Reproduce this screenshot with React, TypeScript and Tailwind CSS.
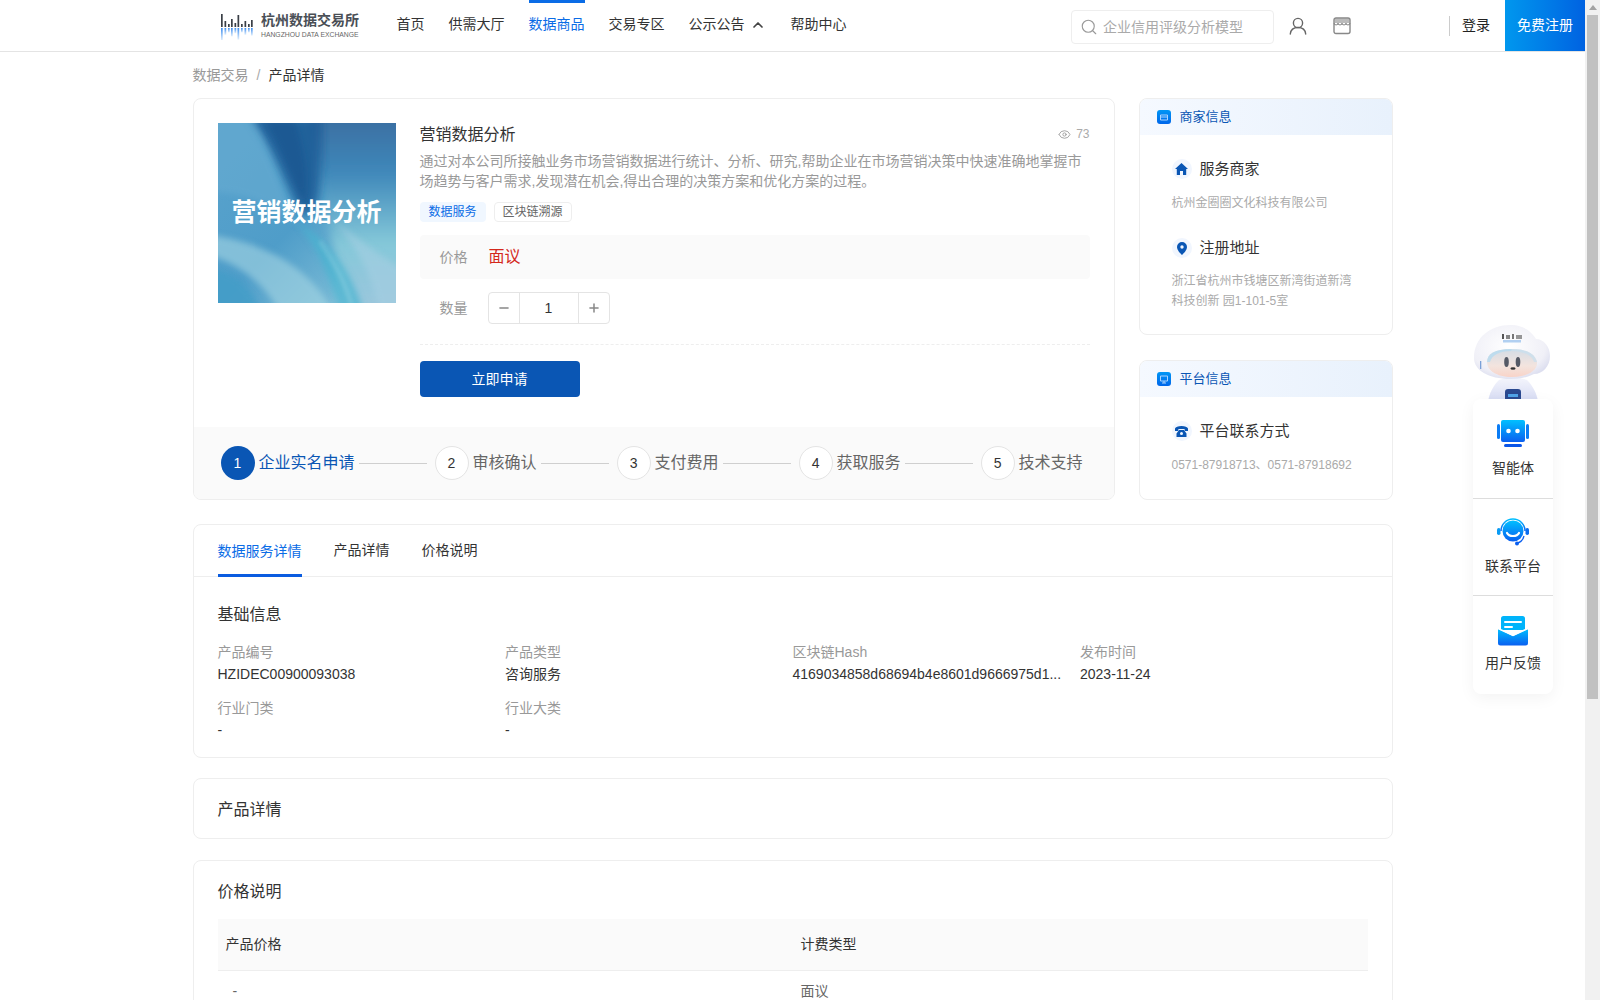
import { ChevronUp, Eye, Minus, Plus, Search } from "lucide-react";

function Logo() {
  const bars = [
    [1, 13], [4.500, 6], [8, 3], [11, 8], [14.500, 4], [17.500, 12], [21, 3], [24.500, 6], [28, 3], [31, 7],
  ];
  return (
    <div className="flex w-[137px] items-center gap-[5px]">
      <svg width="36" height="28" viewBox="0 0 36 28" className="shrink-0">
        <defs>
          <linearGradient id="lg-b" x1="0" y1="0" x2="0" y2="1">
            <stop offset="0" stopColor="#3b8df0" />
            <stop offset="1" stopColor="#e2effc" />
          </linearGradient>
        </defs>
        {bars.map(([x, h], i) => (
          <g key={i}>
            <rect x={x} y={15 - h} width="1.700" height={h} fill="#3a3f47" />
            <rect x={x} y={16} width="1.700" height={h * 0.8 + 2} fill="url(#lg-b)" />
          </g>
        ))}
      </svg>
      <div className="flex flex-col pt-[1px]">
        <span className="text-[14px] leading-[16px] font-bold whitespace-nowrap text-[#4a4f56]">杭州数据交易所</span>
        <span className="mt-[2px] text-[6.800px] leading-[10px] whitespace-nowrap text-[#666]">HANGZHOU DATA EXCHANGE</span>
      </div>
    </div>
  );
}

function Header() {
  const nav = ["首页", "供需大厅", "数据商品", "交易专区"];
  return (
    <header className="flex h-[52px] items-stretch border-b border-[#e4e4e4] bg-white pl-[220px]">
      <Logo />
      <nav className="ml-[39.500px] flex items-stretch gap-6 text-[14px] text-[#333]">
        {nav.map((n) => (
          <a
            key={n}
            className={
              n === "数据商品"
                ? "flex items-center border-t-[3px] border-t-[#0a6ce6] pb-[5px] text-[#0a6ce6]"
                : "flex items-center pb-[2px]"
            }
          >
            {n}
          </a>
        ))}
        <a className="flex items-center gap-[5px] pb-[2px]">
          公示公告
          <ChevronUp size={16} strokeWidth={2.600} className="text-[#444]" />
        </a>
        <a className="ml-[1px] flex items-center pb-[2px]">帮助中心</a>
      </nav>
      <div className="ml-auto flex items-center">
        <div className="mt-[3px] flex h-[34px] w-[203px] items-center gap-[5px] rounded border border-[#eeeeee] pl-2">
          <Search size={18} strokeWidth={1.500} className="text-[#999]" />
          <span className="text-[14px] text-[#aaa]">企业信用评级分析模型</span>
        </div>
        <svg width="18" height="18" viewBox="0 0 18 18" className="ml-[15px]" fill="none" stroke="#666" strokeWidth="1.400">
          <circle cx="9" cy="6" r="4.600" />
          <path d="M1.300 17c.4-4.200 3.300-6.500 7.700-6.500s7.300 2.300 7.700 6.500" strokeLinecap="round" />
        </svg>
        <svg width="18" height="18" viewBox="0 0 18 18" className="ml-[26px]" fill="none" stroke="#888" strokeWidth="1.400">
          <path d="M1.500 1.400h15V6h-15z" fill="#bbb" stroke="none" />
          <rect x="1" y="1" width="16" height="15.500" rx="2" />
          <path d="M1 6c.3 2.600 3.900 2.600 4 0 .2 2.600 3.800 2.600 4 0 .2 2.600 3.800 2.600 4 0 .1 2.600 3.700 2.600 4 0" strokeWidth="1.100" />
        </svg>
        <div className="ml-[98px] h-5 w-px bg-[#ccc]" />
        <span className="ml-[12px] text-[14px] text-[#222]">登录</span>
        <div className="ml-[15px] flex h-[51px] w-20 items-center justify-center bg-linear-to-r from-[#0097ee] to-[#0062e1] text-[14px] text-white">
          免费注册
        </div>
      </div>
    </header>
  );
}

function ProductImage() {
  return (
    <div className="relative h-[180px] w-[178px] shrink-0 overflow-hidden">
      <svg width="178" height="180" viewBox="0 0 178 180" className="block">
        <defs>
          <linearGradient id="img-bg" x1="0" y1="0" x2="1" y2="1">
            <stop offset="0" stopColor="#5aa3cd" />
            <stop offset="0.5" stopColor="#4f9dc9" />
            <stop offset="1" stopColor="#8ec9dc" />
          </linearGradient>
          <linearGradient id="img-right" x1="0" y1="0" x2="0" y2="1">
            <stop offset="0" stopColor="#3a6c9f" />
            <stop offset="0.3" stopColor="#3f88ba" />
            <stop offset="0.65" stopColor="#84c8d9" />
            <stop offset="1" stopColor="#9dc6dd" />
          </linearGradient>
          <filter id="bl5"><feGaussianBlur stdDeviation="5" /></filter>
          <filter id="bl3"><feGaussianBlur stdDeviation="3" /></filter>
          <filter id="bl2"><feGaussianBlur stdDeviation="2" /></filter>
        </defs>
        <rect width="178" height="180" fill="url(#img-bg)" />
        <path d="M90 -10H190V190H120C120 120 100 50 90 -10Z" fill="url(#img-right)" filter="url(#bl5)" />
        <path d="M30 -6C52 18 62 50 84 92 102 92 104 70 104 -6Z" fill="#1f5c96" opacity=".9" filter="url(#bl5)" />
        <path d="M45 -6C62 22 72 50 86 80 92 50 84 20 76 -6Z" fill="#174f8a" opacity=".45" filter="url(#bl3)" />
        <path d="M-10 -10H30C50 20 60 60 82 104 55 80 25 70 -10 68Z" fill="#66abd1" opacity=".6" filter="url(#bl3)" />
        <path d="M-10 112C40 118 90 140 116 190H62C46 160 20 140 -10 132Z" fill="#a5d6e3" opacity=".6" filter="url(#bl3)" />
        <path d="M78 100C96 116 110 150 122 190H146C134 150 112 116 78 100Z" fill="#46b4d0" opacity=".7" filter="url(#bl3)" />
        <path d="M118 100C138 124 154 150 162 190H190V150C165 135 140 115 118 100Z" fill="#a6cfe2" opacity=".6" filter="url(#bl3)" />
        <path d="M-6 146C18 150 34 164 44 190H-10Z" fill="#429dc8" opacity=".8" filter="url(#bl3)" />
        <path d="M102 118C116 140 128 160 134 184" stroke="#d2eef3" strokeWidth="3" opacity=".3" fill="none" filter="url(#bl2)" />
      </svg>
      <div className="absolute inset-x-0 top-[76px] text-center text-[25px] leading-[26px] font-bold whitespace-nowrap text-white">
        营销数据分析
      </div>
    </div>
  );
}

function Steps() {
  const steps = ["审核确认", "支付费用", "获取服务", "技术支持"];
  return (
    <div className="flex h-[72px] items-center bg-[#fafafa] pl-[27px]">
      <span className="flex h-[34px] w-[34px] shrink-0 items-center justify-center rounded-full bg-[#0a56b4] text-[14px] text-white">1</span>
      <span className="ml-1 text-[16px] whitespace-nowrap text-[#0a56b4]">企业实名申请</span>
      <span className="ml-1 h-px w-[68px] bg-[#cfcfcf]" />
      <div className="ml-2 flex items-center">
        {steps.map((s, i) => (
          <div key={s} className="flex items-center">
            <span className="flex h-[34px] w-[34px] shrink-0 items-center justify-center rounded-full border border-[#e4e4e4] bg-white text-[14px] text-[#333]">{i + 2}</span>
            <span className="ml-1 text-[16px] whitespace-nowrap text-[#666]">{s}</span>
            {i < 3 && <span className="mr-2 ml-1 h-px w-[68px] bg-[#cfcfcf]" />}
          </div>
        ))}
      </div>
    </div>
  );
}

function ProductCard() {
  return (
    <section className="flex w-[922px] flex-col overflow-hidden rounded-lg border border-[#eeeeee] bg-white">
      <div className="flex gap-6 px-6 pt-6 pb-[30px]">
        <ProductImage />
        <div className="flex min-w-0 flex-1 flex-col">
          <div className="flex h-[22px] items-center justify-between">
            <h1 className="pt-[2px] text-[16px] text-[#333]">营销数据分析</h1>
            <div className="flex items-center gap-[5px] text-[12px] text-[#aaa]">
              <Eye size={13} strokeWidth={1.600} className="text-[#999]" />
              <span>73</span>
            </div>
          </div>
          <p className="mt-[6px] text-[14px] leading-5 text-[#999]">
            通过对本公司所接触业务市场营销数据进行统计、分析、研究,帮助企业在市场营销决策中快速准确地掌握市场趋势与客户需求,发现潜在机会,得出合理的决策方案和优化方案的过程。
          </p>
          <div className="mt-[11px] flex gap-2 text-[12px] leading-5">
            <span className="h-5 rounded-sm bg-[#f0f7ff] px-[9px] text-[#0a6ce6]">数据服务</span>
            <span className="flex h-5 items-center rounded-sm border border-[#eeeeee] px-2 text-[#666]">区块链溯源</span>
          </div>
          <div className="mt-[13px] flex h-11 items-center rounded bg-[#fafafa] pl-5">
            <span className="w-[49px] text-[14px] text-[#999]">价格</span>
            <span className="text-[16px] text-[#d4281c]">面议</span>
          </div>
          <div className="mt-[13px] flex h-8 items-center pl-5">
            <span className="w-[48px] text-[14px] text-[#999]">数量</span>
            <div className="flex h-8 w-[122px] items-stretch rounded border border-[#e4e4e4]">
              <span className="flex w-[30px] items-center justify-center">
                <Minus size={14} strokeWidth={2.600} className="text-[#888]" />
              </span>
              <span className="flex w-[60px] items-center justify-center border-x border-[#e4e4e4] text-[14px] text-[#333]">1</span>
              <span className="flex flex-1 items-center justify-center">
                <Plus size={14} strokeWidth={2.600} className="text-[#888]" />
              </span>
            </div>
          </div>
          <div className="mt-5 border-t border-dashed border-[#eeeeee]" />
          <button className="mt-4 h-9 w-40 rounded bg-[#0a56b4] text-[14px] text-white">立即申请</button>
        </div>
      </div>
      <Steps />
    </section>
  );
}

function HeadIcon({ kind }: { kind: "shop" | "screen" }) {
  return (
    <svg width="14" height="14" viewBox="0 0 14 14" className="shrink-0">
      <defs>
        <linearGradient id={"hi-" + kind} x1="0" y1="0" x2="0" y2="1">
          <stop offset="0" stopColor="#0096f5" />
          <stop offset="1" stopColor="#0066ea" />
        </linearGradient>
      </defs>
      <rect width="14" height="14" rx="3" fill={"url(#hi-" + kind + ")"} />
      {kind === "shop" ? (
        <path d="M3.500 5h7v5h-7zM3.500 7h7" fill="none" stroke="#a9d3ff" strokeWidth="1" />
      ) : (
        <path d="M3.500 4h7v5h-7zM7 9v2M5 11h4" fill="none" stroke="#a9d3ff" strokeWidth="1" />
      )}
    </svg>
  );
}

function InfoHeader({ title, kind }: { title: string; kind: "shop" | "screen" }) {
  return (
    <div className="flex h-9 items-center gap-[9px] bg-linear-to-r from-[#f5f9ff] to-[#e8f1fc] pl-[17px]">
      <HeadIcon kind={kind} />
      <span className="pb-px text-[13px] text-[#0a56b4]">{title}</span>
    </div>
  );
}

function InfoTitle({ title, icon }: { title: string; icon: React.ReactNode }) {
  return (
    <div className="flex h-5 items-center gap-2">
      <span className="flex h-5 w-5 items-center justify-center rounded-full bg-[#f1f6fe]">{icon}</span>
      <span className="text-[15px] text-[#333]">{title}</span>
    </div>
  );
}

function SideCards() {
  return (
    <aside className="flex w-[254px] flex-col gap-[25px]">
      <div className="overflow-hidden rounded-lg border border-[#eeeeee] bg-white">
        <InfoHeader title="商家信息" kind="shop" />
        <div className="pt-6 pb-[23px] pl-8">
          <InfoTitle
            title="服务商家"
            icon={
              <svg width="13" height="12" viewBox="0 0 13 12" fill="#0a56b4">
                <path d="M6.500 0 13 6h-1.800v6H8V8H5v4H1.800V6H0z" />
              </svg>
            }
          />
          <p className="mt-[14px] text-[12px] leading-5 text-[#aaa]">杭州金圈圈文化科技有限公司</p>
          <div className="mt-[25px]">
            <InfoTitle
              title="注册地址"
              icon={
                <svg width="10" height="13" viewBox="0 0 10 13" fill="#0a56b4">
                  <path fillRule="evenodd" d="M5 0a5 5 0 0 1 5 5c0 3-3 6-5 8-2-2-5-5-5-8a5 5 0 0 1 5-5Zm0 3.300a1.700 1.700 0 1 0 0 3.400 1.700 1.700 0 0 0 0-3.400Z" />
                </svg>
              }
            />
          </div>
          <p className="mt-[13px] w-[184px] text-[12px] leading-5 text-[#aaa]">浙江省杭州市钱塘区新湾街道新湾科技创新 园1-101-5室</p>
        </div>
      </div>
      <div className="flex-1 overflow-hidden rounded-lg border border-[#eeeeee] bg-white">
        <InfoHeader title="平台信息" kind="screen" />
        <div className="pt-6 pl-8">
          <InfoTitle
            title="平台联系方式"
            icon={
              <svg width="13" height="11" viewBox="0 0 13 11" fill="#0a56b4">
                <path d="M6.500 0C3 0 .6 1.200 0 2.600V5h3.200V3.300c1-.5 5.600-.5 6.600 0V5H13V2.600C12.400 1.200 10 0 6.500 0Z" />
                <path fillRule="evenodd" d="M4 4h5l2.500 3.500V11h-10V7.500L4 4Zm2.500 2a1.500 1.500 0 1 0 0 3 1.500 1.500 0 0 0 0-3Z" />
              </svg>
            }
          />
          <p className="mt-[14px] text-[12px] leading-5 text-[#aaa]">0571-87918713、0571-87918692</p>
        </div>
      </div>
    </aside>
  );
}

function Field({ label, value }: { label: string; value: string }) {
  return (
    <div className="min-w-0 text-[14px] leading-[22px]">
      <div className="text-[#999]">{label}</div>
      <div className="whitespace-nowrap text-[#333]">{value}</div>
    </div>
  );
}

function Details() {
  return (
    <section className="mt-6 rounded-lg border border-[#eeeeee] bg-white pb-4">
      <div className="flex h-[52px] gap-8 border-b border-[#eeeeee] pl-6 text-[14px] text-[#333]">
        <a className="flex h-[52px] items-center border-y-[3px] border-t-transparent border-b-[#0a5ce0] text-[#0a6ce6]">数据服务详情</a>
        <a className="flex items-center">产品详情</a>
        <a className="flex items-center">价格说明</a>
      </div>
      <div className="px-6 pt-[26px]">
        <h2 className="text-[16px] leading-6 text-[#333]">基础信息</h2>
        <div className="mt-[14px] grid grid-cols-4 gap-y-3">
          <Field label="产品编号" value="HZIDEC00900093038" />
          <Field label="产品类型" value="咨询服务" />
          <Field label="区块链Hash" value="4169034858d68694b4e8601d9666975d1..." />
          <Field label="发布时间" value="2023-11-24" />
          <Field label="行业门类" value="-" />
          <Field label="行业大类" value="-" />
        </div>
      </div>
    </section>
  );
}

function PriceSection() {
  return (
    <>
      <section className="mt-5 flex h-[61px] items-center rounded-lg border border-[#eeeeee] bg-white pl-6">
        <h2 className="pt-[3px] text-[16px] text-[#333]">产品详情</h2>
      </section>
      <section className="mt-[21px] rounded-lg border border-[#eeeeee] bg-white px-6 pt-[19px] pb-6">
        <h2 className="text-[16px] leading-6 text-[#333]">价格说明</h2>
        <div className="mt-[15px] grid h-[52px] grid-cols-2 items-center border-b border-[#eeeeee] bg-[#fafafa] text-[14px] text-[#333]">
          <div className="pl-2">产品价格</div>
          <div className="pl-2">计费类型</div>
        </div>
        <div className="grid grid-cols-2 py-[9px] text-[14px] leading-[22px] text-[#666]">
          <div className="pl-[15px]">-</div>
          <div className="pl-2">面议</div>
        </div>
      </section>
    </>
  );
}

function Robot() {
  return (
    <svg width="95" height="95" viewBox="0 0 95 95" className="absolute top-[320px] left-[1465px]">
      <defs>
        <radialGradient id="rb-head" cx="0.45" cy="0.4" r="0.7">
          <stop offset="0" stopColor="#ffffff" />
          <stop offset="0.7" stopColor="#f0f0f7" />
          <stop offset="1" stopColor="#d3d6ec" />
        </radialGradient>
        <linearGradient id="rb-visor" x1="0" y1="0" x2="0" y2="1">
          <stop offset="0" stopColor="#d4dce6" />
          <stop offset="0.6" stopColor="#f3e4de" />
          <stop offset="1" stopColor="#f8d3c8" />
        </linearGradient>
        <linearGradient id="rb-body" x1="0" y1="0" x2="0" y2="1">
          <stop offset="0" stopColor="#f4f5fc" />
          <stop offset="1" stopColor="#d5daf3" />
        </linearGradient>
        <filter id="rb-b"><feGaussianBlur stdDeviation="0.700" /></filter>
      </defs>
      <g filter="url(#rb-b)">
        <path d="M34 60c8-3 20-3 28 0 6 6 10 14 11 22H23c1-8 5-16 11-22Z" fill="url(#rb-body)" />
        <path d="M9 38C9 17 26 5 45 5c11 0 20 4 26 14 8 0 14 8 14 17 0 10-7 18-16 18-6 3-14 5-23 5C23 59 9 50 9 38Z" fill="url(#rb-head)" />
        <path d="M22 42c0-8 8-13 24-13s24 5 26 13c1 8-9 15-25 15S22 50 22 42Z" fill="url(#rb-visor)" />
        <path d="M22 42c0-8 8-13 24-13 1 0 1 2 0 2-12 0-19 4-21 11Z" fill="#b5dbf0" opacity=".8" />
        <path d="M72 42c-2-8-10-13-26-13 1 0 1 2 0 2 12 0 21 4 23 11Z" fill="#c8e0f0" opacity=".7" />
        <ellipse cx="41.500" cy="42" rx="2.300" ry="5" fill="#555a66" />
        <ellipse cx="53" cy="42" rx="2.300" ry="5" fill="#555a66" />
        <ellipse cx="48" cy="48.500" rx="2.600" ry="1.300" fill="#333" />
        <rect x="15" y="41" width="1.300" height="8" fill="#7aa0d8" />
        <rect x="37" y="14" width="2" height="5" fill="#555" />
        <rect x="41" y="15" width="4" height="4" fill="#555" opacity=".7" />
        <rect x="47" y="14" width="2" height="5" fill="#555" opacity=".8" />
        <rect x="51" y="15" width="6" height="4" fill="#555" opacity=".6" />
        <rect x="38" y="20" width="18" height="2.500" fill="#9fc4ee" opacity=".8" />
        <rect x="40" y="69" width="16" height="13" rx="3" fill="#2c4a90" />
        <rect x="43" y="74" width="10" height="3" fill="#4fa3e8" />
      </g>
    </svg>
  );
}

function Widget() {
  return (
    <div className="absolute top-[399px] left-[1473px] h-[295px] w-20 rounded-lg bg-white text-center text-[14px] text-[#333] shadow-[0_4px_16px_rgba(0,0,0,0.05)]">
      <div className="flex h-[99px] flex-col items-center pt-[19px]">
        <svg width="32" height="32" viewBox="0 0 32 32">
          <defs>
            <linearGradient id="w1" x1="0" y1="0" x2="0" y2="1">
              <stop offset="0" stopColor="#00c0ff" />
              <stop offset="1" stopColor="#0a5ff0" />
            </linearGradient>
          </defs>
          <rect x="0" y="6" width="3" height="15" rx="1.500" fill="#0a7cf5" />
          <rect x="29" y="6" width="3" height="15" rx="1.500" fill="#0a7cf5" />
          <rect x="4" y="2" width="24" height="22" rx="2" fill="url(#w1)" />
          <circle cx="11.500" cy="13" r="2.300" fill="#fff" />
          <circle cx="20.500" cy="13" r="2.300" fill="#fff" />
          <rect x="7" y="26" width="18" height="3" rx="1.500" fill="#0a55e8" />
        </svg>
        <span className="mt-2 leading-5">智能体</span>
      </div>
      <div className="border-t border-[#dddddd]" />
      <div className="flex h-[96px] flex-col items-center pt-[17px]">
        <svg width="32" height="32" viewBox="0 0 32 32">
          <defs>
            <linearGradient id="w2" x1="0" y1="0" x2="0" y2="1">
              <stop offset="0" stopColor="#00c0ff" />
              <stop offset="1" stopColor="#0a5ff0" />
            </linearGradient>
          </defs>
          <path d="M4 15a12 12 0 0 1 24 0" fill="none" stroke="url(#w2)" strokeWidth="1.500" />
          <rect x="0" y="12" width="3.500" height="7" rx="1.700" fill="#0a9cf5" />
          <rect x="28.500" y="12" width="3.500" height="7" rx="1.700" fill="#0a6cf0" />
          <circle cx="16" cy="15" r="10.500" fill="url(#w2)" />
          <path d="M10 17c2 4 10 4 12 0" fill="none" stroke="#fff" strokeWidth="2.200" strokeLinecap="round" />
          <path d="M27 20c-1 5-5 7-7 7" fill="none" stroke="#0a5ff0" strokeWidth="1.300" />
          <circle cx="20" cy="27.500" r="2" fill="#0a5ff0" />
        </svg>
        <span className="mt-2 leading-5">联系平台</span>
      </div>
      <div className="border-t border-[#dddddd]" />
      <div className="flex flex-col items-center pt-[20px]">
        <svg width="30" height="30" viewBox="0 0 30 30">
          <defs>
            <linearGradient id="w3" x1="0" y1="0" x2="0" y2="1">
              <stop offset="0" stopColor="#00bfff" />
              <stop offset="1" stopColor="#0a5ff0" />
            </linearGradient>
          </defs>
          <path d="M3 2.500A2.500 2.500 0 0 1 5.500 0h19A2.500 2.500 0 0 1 27 2.500V14H3Z" fill="#00b4fb" />
          <rect x="6" y="5" width="18" height="2" rx="1" fill="#fff" />
          <rect x="6" y="10" width="9" height="2" rx="1" fill="#fff" />
          <path d="M0 13 15 20 30 13V27a2.500 2.500 0 0 1-2.500 2.500H2.500A2.500 2.500 0 0 1 0 27Z" fill="url(#w3)" />
          <path d="M0 12.500 15 19.500 30 12.500" fill="none" stroke="#fff" strokeWidth="1.500" />
        </svg>
        <span className="mt-[7px] leading-5">用户反馈</span>
      </div>
    </div>
  );
}

function Scrollbar() {
  return (
    <div className="flex h-full w-[15px] shrink-0 flex-col items-center bg-[#f1f1f1]">
      <div className="flex h-[15px] items-center justify-center">
        <div className="h-0 w-0 border-x-[4px] border-b-[5px] border-x-transparent border-b-[#a3a3a3]" />
      </div>
      <div className="h-[684px] w-[11px] bg-[#c1c1c1]" />
    </div>
  );
}

export default function App() {
  return (
    <div className="relative flex h-[1000px] w-[1600px] overflow-hidden bg-white font-['Liberation_Sans','Noto_Sans_CJK_SC',sans-serif]">
      <div className="h-full w-[1585px] shrink-0">
        <Header />
        <main className="mx-auto w-[1200px]">
          <div className="mb-px flex h-[45px] items-center pt-px text-[14px] text-[#999]">
            <span>数据交易</span>
            <span className="mx-2 text-[#aaa]">/</span>
            <span className="text-[#333]">产品详情</span>
          </div>
          <div className="flex gap-6">
            <ProductCard />
            <SideCards />
          </div>
          <Details />
          <PriceSection />
        </main>
      </div>
      <Scrollbar />
      <Robot />
      <Widget />
    </div>
  );
}
